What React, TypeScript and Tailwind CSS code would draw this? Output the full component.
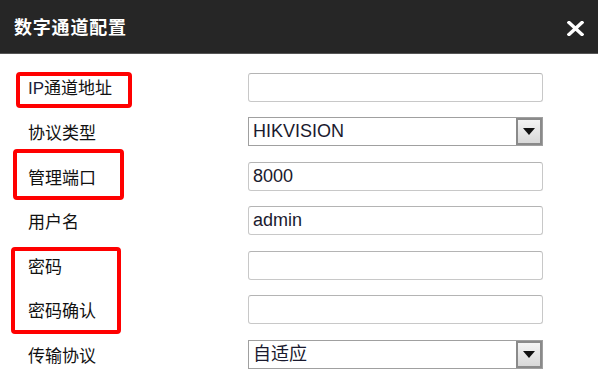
import React from "react";

const cjk = '"Noto Sans CJK SC", "Liberation Sans", sans-serif';
const latin = '"Liberation Sans", "Noto Sans CJK SC", sans-serif';

function TextInput({ value }: { value?: string }) {
  return (
    <div className="w-[295px] h-[29px] border border-[#c8c8c8] border-t-[#b4b4b4] rounded-[3px] bg-white flex items-center pl-[4px] text-[18px] text-[#1a1a2e]" style={{ fontFamily: latin }}>
      {value}
    </div>
  );
}

function SelectBox({ value }: { value: string }) {
  return (
    <div className="w-[295px] h-[29px] border border-[#a0a0a0] bg-white flex items-center text-[18px] text-[#1a1a2e]" style={{ fontFamily: latin }}>
      <div className="flex-1 pl-[4px]">{value}</div>
      <div className="w-[26px] h-[27px] border-2 border-[#8a8a8a] bg-gradient-to-b from-[#f4f4f4] to-[#d8d8d8] flex items-center justify-center">
        <svg width="12" height="7" viewBox="0 0 12 7"><path d="M0 0 H12 L6 7 Z" fill="#111" /></svg>
      </div>
    </div>
  );
}

export default function App() {
  const rows: { label: React.ReactNode; field: React.ReactNode }[] = [
    { label: <><span className="text-[#1c1c3a]" style={{ fontFamily: latin }}>IP</span>通道地址</>, field: <TextInput /> },
    { label: "协议类型", field: <SelectBox value="HIKVISION" /> },
    { label: "管理端口", field: <TextInput value="8000" /> },
    { label: "用户名", field: <TextInput value="admin" /> },
    { label: "密码", field: <TextInput /> },
    { label: "密码确认", field: <TextInput /> },
    { label: "传输协议", field: <SelectBox value="自适应" /> },
  ];
  return (
    <div className="w-[598px] h-[377px] bg-white relative overflow-hidden" style={{ fontFamily: cjk }}>
      <div className="h-[54px] bg-[#262626] border-b border-[#555] flex items-center justify-between pl-[14px] pr-[14px]">
        <div className="text-white font-bold text-[18px] tracking-[0.8px]">数字通道配置</div>
        <svg width="17" height="15" viewBox="0 0 17 15" className="mt-[3px]">
          <path d="M2 1.5 L15 13.5 M15 1.5 L2 13.5" stroke="white" strokeWidth="3.4" strokeLinecap="square" />
        </svg>
      </div>
      <div className="pt-[11px] flex flex-col">
        {rows.map((r, i) => (
          <div key={i} className="h-[44.5px] flex items-center">
            <div className="w-[248px] pl-[28px] text-[17px] text-[#111]">{r.label}</div>
            {r.field}
          </div>
        ))}
      </div>
      <div className="absolute left-[16px] top-[72px] w-[116px] h-[36px] border-[4px] border-[#ff0000] rounded-[4px]" />
      <div className="absolute left-[13px] top-[149px] w-[111px] h-[51px] border-[4px] border-[#ff0000] rounded-[4px]" />
      <div className="absolute left-[11px] top-[247px] w-[110px] h-[87px] border-[4px] border-[#ff0000] rounded-[4px]" />
    </div>
  );
}
